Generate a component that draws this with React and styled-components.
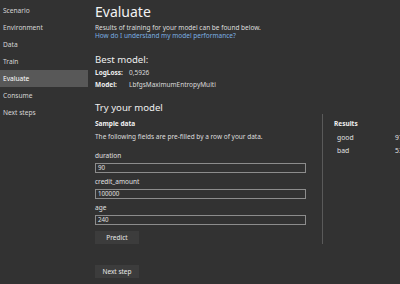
import React from "react";
import styled, { createGlobalStyle } from "styled-components";

const GlobalStyle = createGlobalStyle`
  html, body {
    margin: 0;
    padding: 0;
    background: #323232;
  }
  body {
    font-family: "Noto Sans", "Open Sans", sans-serif;
    color: #e0e0e0;
  }
`;

const Page = styled.div`
  display: flex;
  width: 400px;
  height: 284px;
  overflow: hidden;
  background: #323232;
`;

const Sidebar = styled.nav`
  width: 88px;
  flex-shrink: 0;
  padding-top: 2px;
  display: flex;
  flex-direction: column;
`;

const NavItem = styled.div`
  height: 17px;
  line-height: 17px;
  padding-left: 3px;
  font-size: 6.6px;
  color: ${(p) => (p.active ? "#ffffff" : "#d6d6d6")};
  background: ${(p) => (p.active ? "#585858" : "transparent")};
`;

const Main = styled.main`
  flex: 1;
  padding-left: 7px;
  display: flex;
  flex-direction: column;
`;

const Title = styled.h1`
  margin: 4px 0 0;
  font-size: 14px;
  font-weight: 400;
  line-height: 16px;
  color: #f2f2f2;
`;

const Text = styled.p`
  margin: ${(p) => p.mt || 0}px 0 0;
  font-size: 6.5px;
  line-height: 8px;
  color: #dedede;
`;

const Link = styled.a`
  display: block;
  font-size: 6.5px;
  line-height: 8px;
  color: #7aaee0;
  text-decoration: none;
`;

const SubTitle = styled.h2`
  margin: ${(p) => p.mt || 0}px 0 0;
  font-size: 9.6px;
  font-weight: 400;
  line-height: 13px;
  color: #efefef;
`;

const InfoRow = styled.div`
  display: flex;
  font-size: 6.5px;
  line-height: 12px;
  margin-top: ${(p) => p.mt || 0}px;
`;

const InfoLabel = styled.span`
  width: 34px;
  font-weight: 700;
  color: #f0f0f0;
`;

const InfoValue = styled.span`
  color: #dadada;
`;

const Columns = styled.div`
  display: flex;
  align-items: flex-start;
`;

const FormCol = styled.div`
  width: 211px;
  display: flex;
  flex-direction: column;
`;

const Bold = styled.div`
  font-size: 6.5px;
  font-weight: 700;
  line-height: 10px;
  color: #f0f0f0;
  margin-top: ${(p) => p.mt || 0}px;
`;

const FieldLabel = styled.div`
  font-size: 6.5px;
  line-height: 9px;
  color: #e0e0e0;
  margin-top: ${(p) => p.mt || 0}px;
`;

const Input = styled.div`
  box-sizing: border-box;
  height: 10px;
  margin-top: 3px;
  border: 1px solid #8c8c8c;
  padding-left: 2px;
  font-size: 6.2px;
  line-height: 8px;
  color: #e0e0e0;
`;

const Button = styled.div`
  width: 44px;
  height: 13px;
  line-height: 13px;
  text-align: center;
  background: #3c3c3c;
  font-size: 6.5px;
  color: #e8e8e8;
  margin-top: ${(p) => p.mt || 0}px;
`;

const Divider = styled.div`
  width: 1px;
  height: 130px;
  margin-left: 16px;
  background: #5a5a5a;
`;

const ResultsCol = styled.div`
  padding-left: 11px;
  display: flex;
  flex-direction: column;
`;

const ResultRow = styled.div`
  display: flex;
  font-size: 6.8px;
  line-height: 13px;
  color: #e0e0e0;
  padding-left: 3px;
  white-space: nowrap;
`;

const ResultName = styled.span`
  width: 58px;
`;

const nav = ["Scenario", "Environment", "Data", "Train", "Evaluate", "Consume", "Next steps"];

const fields = [
  { name: "duration", value: "90" },
  { name: "credit_amount", value: "100000" },
  { name: "age", value: "240" },
];

export default function App() {
  return (
    <>
      <GlobalStyle />
      <Page>
        <Sidebar>
          {nav.map((n) => (
            <NavItem key={n} active={n === "Evaluate"}>
              {n}
            </NavItem>
          ))}
        </Sidebar>
        <Main>
          <Title>Evaluate</Title>
          <Text mt={4}>Results of training for your model can be found below.</Text>
          <Link>How do I understand my model performance?</Link>
          <SubTitle mt={13}>Best model:</SubTitle>
          <InfoRow mt={1}>
            <InfoLabel>LogLoss:</InfoLabel>
            <InfoValue>0,5926</InfoValue>
          </InfoRow>
          <InfoRow>
            <InfoLabel>Model:</InfoLabel>
            <InfoValue>LbfgsMaximumEntropyMulti</InfoValue>
          </InfoRow>
          <SubTitle mt={10}>Try your model</SubTitle>
          <Columns>
            <FormCol>
              <Bold mt={5}>Sample data</Bold>
              <Text mt={4}>The following fields are pre-filled by a row of your data.</Text>
              {fields.map((f, i) => (
                <React.Fragment key={f.name}>
                  <FieldLabel mt={i === 0 ? 10 : 4}>{f.name}</FieldLabel>
                  <Input>{f.value}</Input>
                </React.Fragment>
              ))}
              <Button mt={6}>Predict</Button>
              <Button mt={21}>Next step</Button>
            </FormCol>
            <Divider />
            <ResultsCol>
              <Bold mt={5}>Results</Bold>
              <ResultRow style={{ marginTop: 2 }}>
                <ResultName>good</ResultName>
                <span>97%</span>
              </ResultRow>
              <ResultRow>
                <ResultName>bad</ResultName>
                <span>53%</span>
              </ResultRow>
            </ResultsCol>
          </Columns>
        </Main>
      </Page>
    </>
  );
}
